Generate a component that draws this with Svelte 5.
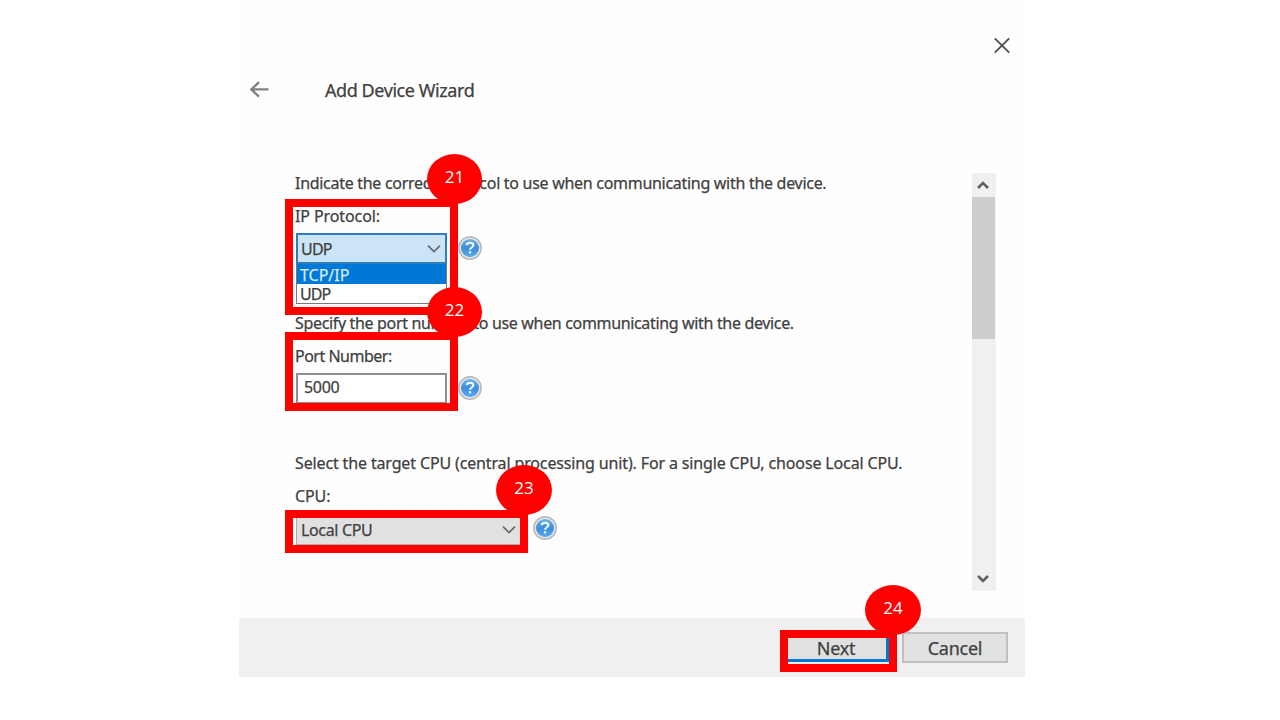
<script>
  const marks = [
    { n: 21, frame: [285, 199, 173, 116], badge: [427, 154, 55] },
    { n: 22, frame: [285, 332, 173, 79], badge: [427, 287, 55] },
    { n: 23, frame: [285, 510, 243, 43], badge: [496, 465, 56] },
    { n: 24, frame: [780, 630, 117, 42], badge: [865, 585, 56] }
  ];
</script>

{#snippet help()}
  <svg class="help" width="26" height="26" viewBox="0 0 26 26">
    <defs>
      <linearGradient id="blue" x1="0" y1="0" x2="0" y2="1">
        <stop offset="0" stop-color="#6fb3ea" />
        <stop offset="0.5" stop-color="#3c8ddb" />
        <stop offset="1" stop-color="#58aaf0" />
      </linearGradient>
    </defs>
    <circle cx="13" cy="13" r="11.2" fill="#e2e2e2" stroke="#b8b8b8" stroke-width="1.5" />
    <circle cx="13" cy="13" r="9" fill="url(#blue)" />
    <path d="M9.6 10.2C9.9 8.4 11.2 7.7 13 7.7c2 0 3.4.9 3.4 2.5 0 2.3-3.4 2.3-3.4 4.6" fill="none" stroke="#f4faff" stroke-width="2" />
    <rect x="11.9" y="16.2" width="2.2" height="2.2" fill="#f4faff" />
  </svg>
{/snippet}

{#snippet chevron()}
  <svg width="14" height="9" viewBox="0 0 14 9"><path d="M1 1.7 7 7.5 13 1.7" fill="none" stroke="#686868" stroke-width="1.7" /></svg>
{/snippet}

<main>
  <div class="wizard">
    <header>
      <svg class="close" width="18" height="18" viewBox="0 0 18 18"><path d="M1.8 1.3 16.2 15.7M16.2 1.3 1.8 15.7" stroke="#4c4c4c" stroke-width="1.8" /></svg>
      <div class="title">
        <svg width="20" height="18" viewBox="0 0 20 18"><path d="M18.5 8.4H1.5M9 1.2 1.2 8.4 9 15.6" fill="none" stroke="#808080" stroke-width="2.3" /></svg>
        <h1>Add Device Wizard</h1>
      </div>
    </header>

    <div class="content">
      <form>
        <section>
          <p class="t1">Indicate the correct protocol to use when communicating with the device.</p>
          <span class="label l1">IP Protocol:</span>
          <div class="field">
            <div class="combo">
              <div class="select open"><span>UDP</span>{@render chevron()}</div>
              <div class="list">
                <div class="option active">TCP/IP</div>
                <div class="option">UDP</div>
              </div>
            </div>
            {@render help()}
          </div>
        </section>
        <section>
          <p class="t2">Specify the port number to use when communicating with the device.</p>
          <span class="label l2">Port Number:</span>
          <div class="field">
            <div class="input">5000</div>
            {@render help()}
          </div>
        </section>
        <section>
          <p class="t3">Select the target CPU (central processing unit). For a single CPU, choose Local CPU.</p>
          <span class="label">CPU:</span>
          <div class="field">
            <div class="select cpu"><span>Local CPU</span>{@render chevron()}</div>
            {@render help()}
          </div>
        </section>
      </form>

      <div class="scrollbar">
        <div class="arrow"><svg width="12" height="10" viewBox="0 0 12 10"><path d="M1 8 6 3 11 8" fill="none" stroke="#606060" stroke-width="2.6" /></svg></div>
        <div class="thumb"></div>
        <div class="arrow down"><svg width="12" height="10" viewBox="0 0 12 10"><path d="M1 2 6 7 11 2" fill="none" stroke="#606060" stroke-width="2.6" /></svg></div>
      </div>
    </div>

    <footer>
      <div class="button next">Next</div>
      <div class="button">Cancel</div>
    </footer>
  </div>

  {#each marks as { n, frame, badge }}
    <div class="frame" style="left:{frame[0]}px;top:{frame[1]}px;width:{frame[2]}px;height:{frame[3]}px"></div>
    <div class="badge" style="left:{badge[0]}px;top:{badge[1]}px;width:{badge[2]}px">{n}</div>
  {/each}
</main>

<style>
  :global(body) { background: #fff; overflow: hidden; }
  main {
    position: relative;
    width: 1280px;
    height: 720px;
    font-family: "Noto Sans", sans-serif;
    font-size: 16px;
    color: #404040;
  }
  * { box-sizing: border-box; }
  svg { display: block; flex: none; }
  .wizard {
    width: 786px;
    height: 677px;
    margin-left: 239px;
    display: flex;
    flex-direction: column;
    background: #fefefe;
    -webkit-text-stroke: 0.25px currentColor;
  }
  header { height: 171px; padding: 37px 14px 0 12px; }
  .close { margin-left: auto; }
  .title { display: flex; align-items: center; gap: 54px; height: 24px; margin-top: 22px; }
  .title svg { margin: 2px 1px 0 -1px; }
  h1 { margin: 0; padding-top: 2px; font-size: 18px; line-height: 24px; font-weight: 400; letter-spacing: -0.43px; white-space: nowrap; }
  .content { height: 447px; padding: 0 29px 0 56px; display: flex; justify-content: space-between; }
  section { height: 140px; display: flex; flex-direction: column; align-items: flex-start; }
  p, .label { margin: 0; height: 24px; line-height: 24px; white-space: nowrap; letter-spacing: -0.34px; }
  .t1 { letter-spacing: -0.29px; }
  .t3 { letter-spacing: -0.14px; }
  .label { margin-top: 9px; letter-spacing: -0.1px; }
  .l2 { letter-spacing: -0.5px; }
  .field { display: flex; gap: 10px; padding-left: 1px; margin-top: 5px; }
  .combo { width: 151px; }
  .help { margin-top: 2px; }
  .select {
    height: 31px;
    padding: 0 5px 0 4px;
    display: flex;
    align-items: center;
    justify-content: space-between;
    border: 1px solid #adadad;
    background: #e1e1e1;
    letter-spacing: -0.35px;
  }
  .open { border: 2px solid #2f7dbb; background: #cce4f7; padding: 0 4px 0 3px; letter-spacing: -0.8px; }
  .open span { padding-top: 1px; }
  .cpu { width: 226px; margin-top: 1px; }
  .list { height: 40px; border: 1px solid #7a7a7a; border-top: 0; background: #fff; }
  .option { height: 20px; line-height: 21px; padding-left: 3px; letter-spacing: -0.9px; }
  .active { line-height: 22px; letter-spacing: 0; background: #0078d7; color: #d8eaff; }
  .input { width: 151px; height: 31px; line-height: 25px; border: 2px solid #8f8f8f; padding-left: 6px; background: #fff; letter-spacing: -0.3px; }
  .scrollbar { width: 24px; height: 418px; margin-top: 2px; background: #f0f0f0; display: flex; flex-direction: column; }
  .arrow { height: 24px; padding-right: 2px; display: grid; place-items: center; }
  .down { margin-top: auto; }
  .thumb { height: 142px; width: 23px; background: #cdcdcd; }
  footer { height: 59px; padding: 14px 17px 0 0; display: flex; justify-content: flex-end; gap: 13px; background: #f0f0f0; }
  .button { width: 106px; height: 31px; border: 2px solid #bfbfbf; background: #e1e1e1; font-size: 18px; line-height: 28px; letter-spacing: -0.25px; text-align: center; }
  .next { border: 3px solid #0078d7; line-height: 26px; height: 30px; }
  .frame { position: absolute; border: 8px solid #f00; }
  .badge {
    position: absolute;
    height: 50px;
    border-radius: 50%;
    background: #f00;
    color: #fff;
    font-family: "Open Sans", sans-serif;
    font-size: 17px;
    line-height: 45px;
    text-align: center;
  }
</style>
